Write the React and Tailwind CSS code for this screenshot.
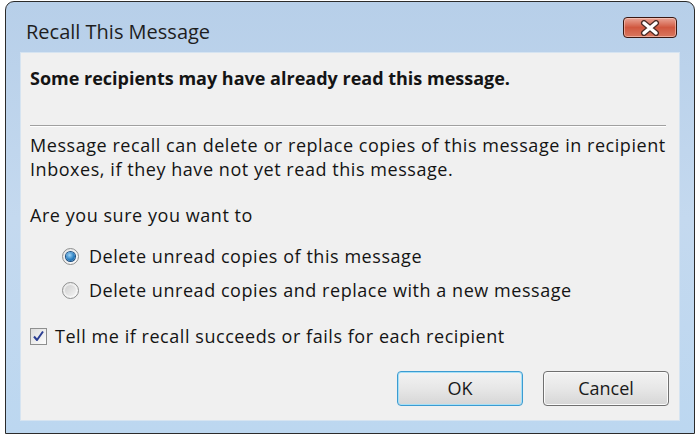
import React from "react";

const font = { fontFamily: '"Open Sans", "Noto Sans", sans-serif' };

const Radio = ({ checked }) => (
  <span className="relative w-[17px] h-[17px] rounded-full border border-[#8e8f8f] bg-gradient-to-br from-[#e6e6e6] to-[#fbfbfb] flex items-center justify-center shrink-0">
    {checked ? (
      <span className="w-[9px] h-[9px] rounded-full bg-[radial-gradient(circle_at_40%_35%,#9fd4f7,#2a7fc1_55%,#0e4f8c)] shadow-[0_0_0_1px_#1d4f80]" />
    ) : (
      <span className="w-[11px] h-[11px] rounded-full bg-gradient-to-br from-[#cfcfcf] to-[#f4f4f4]" />
    )}
  </span>
);

const Checkbox = () => (
  <span className="w-[17px] h-[17px] border border-[#8e8f8f] bg-gradient-to-br from-[#dcdcdc] to-[#fdfdfd] flex items-center justify-center shrink-0">
    <svg width="13" height="13" viewBox="0 0 13 13">
      <path d="M2 6.5 L5 10 L11 1.5" fill="none" stroke="#2b3e93" strokeWidth="2" strokeLinejoin="round" />
    </svg>
  </span>
);

const CloseButton = () => (
  <div className="mt-[15px] w-[54px] h-[21px] rounded-[4px] border border-[#3a1812] bg-gradient-to-b from-[#e9a597] via-[#d0573f] to-[#d9775f] flex items-center justify-center shadow-[inset_0_0_0_1px_rgba(255,220,210,0.5)]">
    <svg width="22" height="16" viewBox="0 0 22 16">
      <path d="M5 3 L17 13 M17 3 L5 13" stroke="#4a2a24" strokeWidth="6" strokeLinecap="round" />
      <path d="M5 3 L17 13 M17 3 L5 13" stroke="#ffffff" strokeWidth="3.5" strokeLinecap="round" />
    </svg>
  </div>
);

const Button = ({ children, focused }) => (
  <button
    className={
      focused
        ? "w-[126px] h-[35px] rounded-[4px] border border-[#3c9bd1] shadow-[inset_0_0_0_1px_#a6e0f7] bg-gradient-to-b from-[#f3f3f3] via-[#e7e7e7] to-[#d6d6d6] text-[18px] text-[#1a1a1a]"
        : "w-[126px] h-[35px] rounded-[4px] border border-[#707070] shadow-[inset_0_0_0_1px_#fbfbfb] bg-gradient-to-b from-[#f3f3f3] via-[#e7e7e7] to-[#d6d6d6] text-[18px] text-[#1a1a1a]"
    }
  >
    {children}
  </button>
);

export default function App() {
  return (
    <div className="w-[700px] h-[439px] bg-white pt-px pl-[5px]" style={font}>
      <div className="w-[690px] h-[433px] rounded-t-[9px] border border-[#2b2b2b] bg-gradient-to-b from-[#b7cfe9] via-[#c4d9ef] to-[#bcd7f0] flex flex-col px-[14px] pb-[12px]">
        {/* Title bar */}
        <div className="h-[50px] flex items-start justify-between pl-[6px] pr-[3px] shrink-0">
          <span className="mt-[16px] text-[20px] leading-[27px] text-[#1e1e1e]">Recall This Message</span>
          <CloseButton />
        </div>

        {/* Body */}
        <div className="flex-1 bg-[#f0f0f0] border border-[#d6e4f1] flex flex-col pl-[9px] pr-[10px] text-[18px] text-[#141414] tracking-[0.55px]">
          <p className="font-bold mt-[13px] leading-[24px] tracking-normal">
            Some recipients may have already read this message.
          </p>
          <div className="mt-[35px] mr-[3px] h-[2px] border-t border-[#a0a0a0] border-b-white border-b" />
          <p className="mt-[6px] leading-[24px]">
            Message recall can delete or replace copies of this message in recipient
            <br />
            Inboxes, if they have not yet read this message.
          </p>
          <p className="mt-[22px] leading-[24px]">Are you sure you want to</p>

          <div className="mt-[17px] pl-[32px] flex flex-col gap-[10px]">
            <label className="flex items-center gap-[10px] leading-[24px]">
              <Radio checked />
              Delete unread copies of this message
            </label>
            <label className="flex items-center gap-[10px] leading-[24px]">
              <Radio />
              Delete unread copies and replace with a new message
            </label>
          </div>

          <label className="mt-[22px] flex items-center gap-[8px] leading-[24px]">
            <Checkbox />
            Tell me if recall succeeds or fails for each recipient
          </label>

          <div className="mt-[23px] flex justify-end gap-[20px] tracking-normal">
            <Button focused>OK</Button>
            <Button>Cancel</Button>
          </div>
        </div>
      </div>
    </div>
  );
}
